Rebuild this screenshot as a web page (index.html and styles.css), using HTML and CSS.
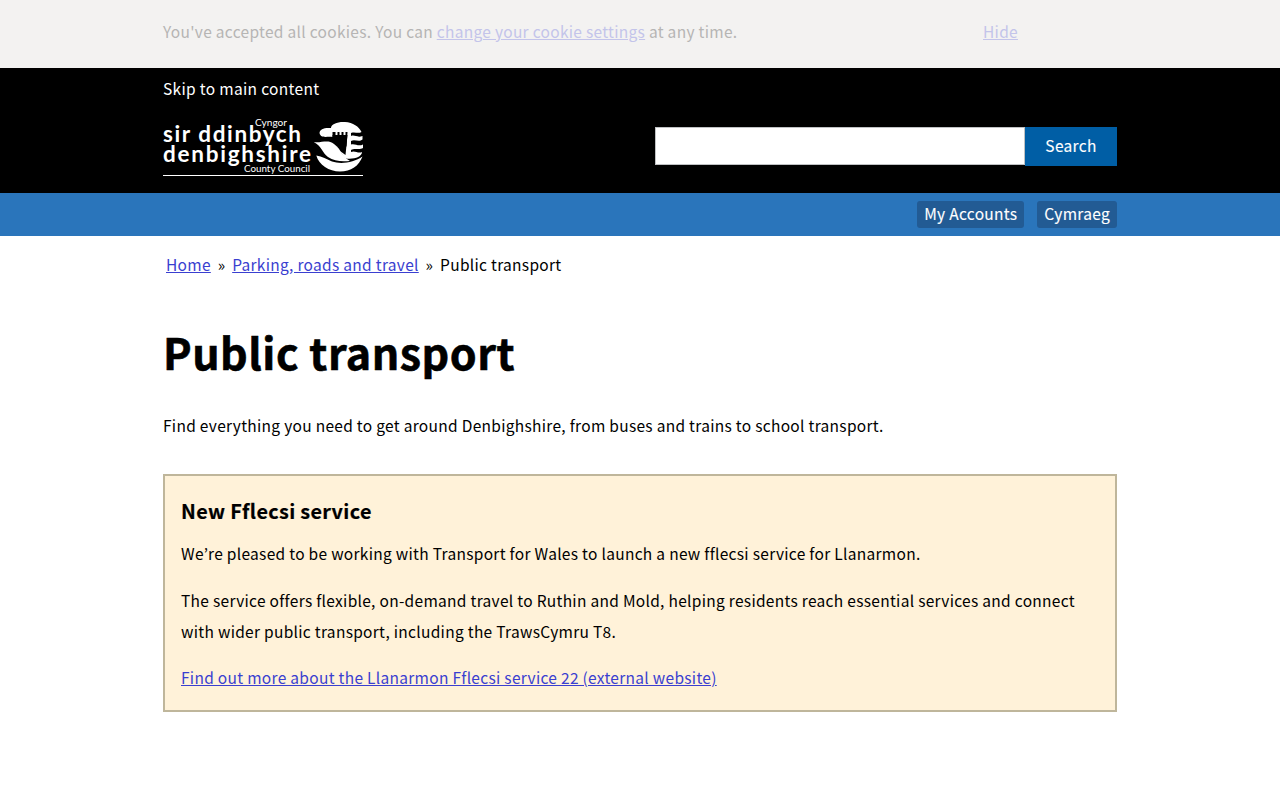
FILE: index.html
```html
<!DOCTYPE html>
<html lang="en">
<head>
<meta charset="utf-8">
<title>Public transport | Denbighshire County Council</title>
<link rel="stylesheet" href="styles.css">
</head>
<body>
<div class="cookie"><div class="wrap cookie-row">
<p class="cookie-text">You've accepted all cookies. You can <a href="#">change your cookie settings</a> at any time.</p>
<a class="hide" href="#">Hide</a>
</div></div>
<header class="header"><div class="wrap">
<a class="skip" href="#main">Skip to main content</a>
<div class="brand-row">
<a class="logo" href="#"><svg width="200" height="56" viewBox="0 0 200 56" fill="#fff">
<g class="logo-text">
<text x="92" y="7.300" font-size="9.500" textLength="32" lengthAdjust="spacingAndGlyphs">Cyngor</text>
<text x="0" y="23" font-size="22.500" textLength="138" class="logo-name">sir ddinbych</text>
<text x="0" y="42.500" font-size="22.500" textLength="148" class="logo-name">denbighshire</text>
<text x="81" y="52.500" font-size="9.500" textLength="66" lengthAdjust="spacingAndGlyphs">County Council</text>
</g>
<path d="M156.500 14C157 10 161 8.500 168 9C168 5 175 2.500 182 3C190 3.500 196 7.500 198.500 13C195 15 192 12.500 188 14V17C192 15.500 194 19 199.500 17V20.500C196 23.500 192 20 188 22V25.500C192 24 195 28 200 25.500V29C196 31.500 192 28.500 188 31V33C192 31 195 35 199 33C199 38 191 40.500 183 39.500C179 37 178 32 174 27.500H183.500L184.500 13H182.500V16H180.500V13H178.500V16H176.500V13H174.500V16H172.500V13H169.500V18C164 17 158 20 156.500 14Z"/>
<path d="M169.500 16L184.500 16L182.500 36L177 32C174 26 171 24 169.500 22Z" fill="#000"/>
<path d="M150.700 23C159 24 165 20 171 25C179 31 178 37 187 42C178 43 171 42 165 38C159 34 159 27 150.700 23Z"/>
<path d="M153.300 36.500C159 37.500 164 40 169 42.500C178 45.500 191 43.500 199.500 37.500C196 47 188 52.500 177 52.500C166 52.500 156 46 153.300 36.500Z"/>
</svg></a>
<form class="search"><input type="text" aria-label="Search"><button type="button">Search</button></form>
</div>
</div></header>
<nav class="bar"><div class="wrap bar-row"><a href="#">My Accounts</a><a href="#">Cymraeg</a></div></nav>
<main class="wrap" id="main">
<div class="crumbs"><a href="#">Home</a><span>»</span><a href="#">Parking, roads and travel</a><span>»</span><b>Public transport</b></div>
<h1>Public transport</h1>
<p class="intro">Find everything you need to get around Denbighshire, from buses and trains to school transport.</p>
<section class="notice">
<h2>New Fflecsi service</h2>
<p>We’re pleased to be working with Transport for Wales to launch a new fflecsi service for Llanarmon.</p>
<p>The service offers flexible, on-demand travel to Ruthin and Mold, helping residents reach essential services and connect with wider public transport, including the TrawsCymru T8.</p>
<p><a href="#">Find out more about the Llanarmon Fflecsi service 22 (external website)</a></p>
</section>
</main>
</body>
</html>
```
FILE: styles.css
```css
* { box-sizing: border-box; }
body { margin: 0; background: #fff; color: #000; font: 15.5px/31px "Noto Sans CJK KR", "Open Sans", sans-serif; letter-spacing: .3px; }
p, h1, h2 { margin: 0; }
a { color: #3a3fd0; }
.wrap { width: 954px; margin: 0 auto; }
.cookie { height: 68px; background: #f3f2f1; padding-top: 16px; }
.cookie-row { display: flex; color: #b6b5b4; }
.cookie-row a { color: #c3c4ea; }
.cookie-text { width: 820px; }
.header { height: 125px; background: #000; padding-top: 5px; }
.skip { display: block; color: #fff; text-decoration: none; letter-spacing: .33px; }
.brand-row { display: flex; justify-content: space-between; margin-top: 15px; }
.logo { width: 200px; height: 57px; border-bottom: 1px solid #fff; }
.logo svg { display: block; overflow: visible; }
.logo-text { font-family: Lato, "Liberation Sans", sans-serif; letter-spacing: 0; }
.logo-name { font-weight: bold; }
.search { display: flex; margin-top: 8px; }
.search input { width: 370px; height: 38px; border: 1px solid #bfc1c3; background: #fff; }
.search button { width: 92px; height: 39px; border: 0; padding: 0 0 2px; background: #005ea5; color: #fff; font: inherit; letter-spacing: inherit; -webkit-text-stroke: .1px #fff; }
.bar { height: 43px; background: #2a75bb; padding-top: 8px; }
.bar-row { display: flex; justify-content: flex-end; gap: 13px; }
.bar-row a { height: 27px; line-height: 25px; padding: 0 7px; border-radius: 3px; background: #225b94; color: #fff; text-decoration: none; -webkit-text-stroke: .1px #fff; }
.crumbs { display: flex; gap: 6.8px; padding: 13px 3px 0; }
.crumbs b { font-weight: 400; }
h1 { font-size: 43px; line-height: 60px; margin-top: 41px; letter-spacing: .5px; -webkit-text-stroke: .6px #000; }
.intro { margin-top: 29px; }
.notice { margin-top: 33px; height: 238px; border: 2px solid #bfb69b; background: #fff2d9; padding: 19px 16px; }
h2 { font-size: 19.8px; line-height: 31px; margin-bottom: 12px; letter-spacing: .35px; -webkit-text-stroke: .2px #000; }
.notice p { margin-bottom: 15.5px; }
```
